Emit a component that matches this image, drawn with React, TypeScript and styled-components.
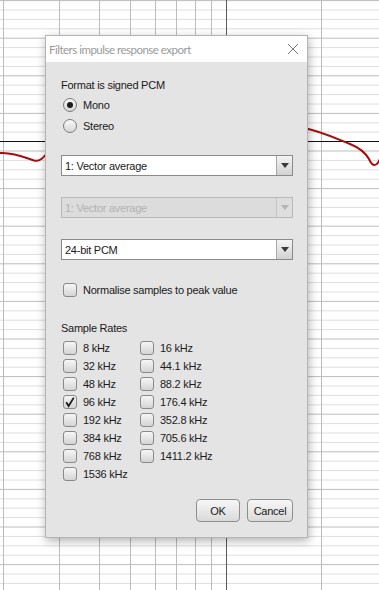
import React from 'react';
import styled, { createGlobalStyle } from 'styled-components';

const GlobalStyle = createGlobalStyle`
  html, body {
    margin: 0;
    padding: 0;
    background: #fff;
  }
  body {
    font-family: "Liberation Sans", Arial, sans-serif;
  }
`;

const Page = styled.div`
  position: relative;
  width: 379px;
  height: 590px;
  overflow: hidden;
  background: #fff;
`;

const Chart = styled.svg`
  position: absolute;
  inset: 0;
`;

const Dialog = styled.div`
  position: absolute;
  left: 45px;
  top: 35px;
  width: 263px;
  height: 503px;
  display: flex;
  flex-direction: column;
  background: #e4e4e4;
  border: 1px solid #b4b4b4;
  box-sizing: border-box;
  box-shadow: 1px 3px 9px rgba(0, 0, 0, 0.3);
`;

const TitleBar = styled.div`
  height: 26px;
  flex: none;
  display: flex;
  align-items: center;
  justify-content: space-between;
  padding: 0 8px 0 3px;
  background: #fff;
  color: #9a9a9a;
  font-family: Lato, "Open Sans", sans-serif;
  font-size: 11.5px;
  letter-spacing: -0.5px;
`;

const Body = styled.div`
  flex: 1;
  display: flex;
  flex-direction: column;
  padding: 15px 14px 15px 15px;
  font-size: 11px;
  letter-spacing: -0.25px;
  color: #1a1a1a;
`;

const Label = styled.div<{ $top?: number }>`
  height: 16px;
  line-height: 16px;
  margin-top: ${(p) => p.$top ?? 0}px;
`;

const OptionRow = styled.label<{ $h?: number; $top?: number }>`
  display: flex;
  align-items: center;
  gap: 6px;
  height: ${(p) => p.$h ?? 21}px;
  margin-top: ${(p) => p.$top ?? 0}px;
  padding-left: 2px;
`;

const Radio = styled.span<{ $on?: boolean }>`
  width: 14px;
  height: 14px;
  border-radius: 50%;
  box-sizing: border-box;
  border: 1px solid #7a7a7a;
  background: linear-gradient(#fafafa, #d6d6d6);
  display: flex;
  align-items: center;
  justify-content: center;
  &::after {
    content: '';
    display: ${(p) => (p.$on ? 'block' : 'none')};
    width: 6px;
    height: 6px;
    border-radius: 50%;
    background: #1c1c1c;
  }
`;

const Box = styled.span`
  width: 14px;
  height: 14px;
  border-radius: 3px;
  box-sizing: border-box;
  border: 1px solid #8a8a8a;
  background: linear-gradient(#f6f6f6, #d4d4d4);
  display: flex;
  align-items: center;
  justify-content: center;
  flex: none;
`;

const Combo = styled.div<{ $disabled?: boolean; $top: number }>`
  display: flex;
  height: 21px;
  margin-top: ${(p) => p.$top}px;
  box-sizing: border-box;
  border: 1px solid ${(p) => (p.$disabled ? '#b8b8b8' : '#8a8a8a')};
  background: ${(p) => (p.$disabled ? '#dcdcdc' : '#fff')};
  color: ${(p) => (p.$disabled ? '#b2b2b2' : '#1a1a1a')};
`;

const ComboText = styled.div`
  flex: 1;
  display: flex;
  align-items: center;
  padding-left: 3px;
`;

const ComboArrow = styled.div<{ $disabled?: boolean }>`
  width: 15px;
  display: flex;
  align-items: center;
  justify-content: center;
  border-left: 1px solid ${(p) => (p.$disabled ? '#c4c4c4' : '#a8a8a8')};
  background: ${(p) =>
    p.$disabled ? '#dedede' : 'linear-gradient(#f4f4f4, #d2d2d2)'};
  &::after {
    content: '';
    border-left: 4.5px solid transparent;
    border-right: 4.5px solid transparent;
    border-top: 5px solid ${(p) => (p.$disabled ? '#b4b4b4' : '#3a3a3a')};
  }
`;

const RateGrid = styled.div`
  display: grid;
  grid-template-columns: 77px auto;
  grid-auto-rows: 18px;
  margin-top: 3px;
`;

const RateItem = styled.label`
  display: flex;
  align-items: center;
  gap: 6px;
  padding-left: 2px;
`;

const Buttons = styled.div`
  display: flex;
  justify-content: flex-end;
  gap: 7px;
  margin-top: auto;
`;

const Button = styled.button<{ $w: number }>`
  width: ${(p) => p.$w}px;
  height: 23px;
  padding: 0;
  border: 1px solid #8e8e8e;
  border-radius: 4px;
  background: linear-gradient(#f7f7f7, #dadada);
  font-family: "Liberation Sans", Arial, sans-serif;
  font-size: 11px;
  letter-spacing: -0.25px;
  color: #1a1a1a;
`;

const Check = () => (
  <svg width="12" height="12" viewBox="0 0 12 12">
    <path d="M2.2 6.2 L4.6 10 L9.8 1.6" fill="none" stroke="#1c1c1c" strokeWidth="1.8" />
  </svg>
);

const CloseIcon = () => (
  <svg width="12" height="12" viewBox="0 0 12 12">
    <path d="M1 1 L11 11 M11 1 L1 11" stroke="#7a7a7a" strokeWidth="1" />
  </svg>
);

const verticals = [3, 59, 99, 130, 155, 176, 195, 211, 321];

const Background = () => {
  const lines: React.ReactNode[] = [];
  for (let i = 0; i < 64; i++) {
    const y = 0.6 + i * 9.4;
    const major = i % 4 === 0;
    lines.push(
      <line key={'h' + i} x1={0} x2={379} y1={y} y2={y}
        stroke={major ? '#bdbdbd' : '#dedede'} strokeWidth={1} />
    );
  }
  return (
    <Chart width={379} height={590} viewBox="0 0 379 590">
      {lines}
      {verticals.map((x) => (
        <line key={x} x1={x + 0.5} x2={x + 0.5} y1={0} y2={590} stroke="#bcbcbc" />
      ))}
      <line x1={226.5} x2={226.5} y1={0} y2={590} stroke="#5a5a5a" />
      <line x1={0} x2={379} y1={141.5} y2={141.5} stroke="#111" />
      <path d="M0 153 C12 152 24 157 34 160.5 C40 162 44 157 48 152" fill="none" stroke="#a80c0c" strokeWidth={2} />
      <path d="M304 128 C320 131 335 138 350 144 C360 148 365 152 369 159 C372 166 376 168 380 159" fill="none" stroke="#a80c0c" strokeWidth={2} />
    </Chart>
  );
};

const rates = [
  ['8 kHz', '16 kHz'],
  ['32 kHz', '44.1 kHz'],
  ['48 kHz', '88.2 kHz'],
  ['96 kHz', '176.4 kHz'],
  ['192 kHz', '352.8 kHz'],
  ['384 kHz', '705.6 kHz'],
  ['768 kHz', '1411.2 kHz'],
  ['1536 kHz', ''],
];

export default function App() {
  return (
    <Page>
      <GlobalStyle />
      <Background />
      <Dialog>
        <TitleBar>
          <span>Filters impulse response export</span>
          <CloseIcon />
        </TitleBar>
        <Body>
          <Label>Format is signed PCM</Label>
          <OptionRow $top={1}>
            <Radio $on />
            Mono
          </OptionRow>
          <OptionRow>
            <Radio />
            Stereo
          </OptionRow>
          <Combo $top={19}>
            <ComboText>1: Vector average</ComboText>
            <ComboArrow />
          </Combo>
          <Combo $top={21} $disabled>
            <ComboText>1: Vector average</ComboText>
            <ComboArrow $disabled />
          </Combo>
          <Combo $top={21}>
            <ComboText>24-bit PCM</ComboText>
            <ComboArrow />
          </Combo>
          <OptionRow $h={20} $top={20}>
            <Box />
            Normalise samples to peak value
          </OptionRow>
          <Label $top={20}>Sample Rates</Label>
          <RateGrid>
            {rates.flat().map((r, i) =>
              r ? (
                <RateItem key={r}>
                  <Box>{r === '96 kHz' && <Check />}</Box>
                  {r}
                </RateItem>
              ) : (
                <span key={'e' + i} />
              )
            )}
          </RateGrid>
          <Buttons>
            <Button $w={44}>OK</Button>
            <Button $w={46}>Cancel</Button>
          </Buttons>
        </Body>
      </Dialog>
    </Page>
  );
}
